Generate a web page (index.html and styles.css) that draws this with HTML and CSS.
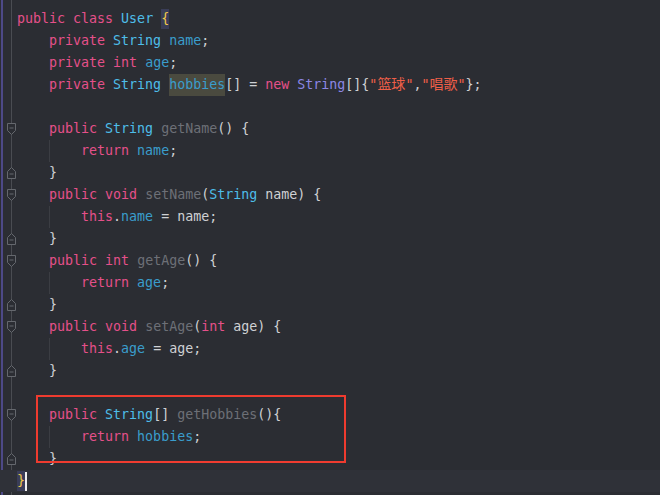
FILE: index.html
```html
<!DOCTYPE html>
<html>
<head>
<meta charset="utf-8">
<link rel="stylesheet" href="styles.css">
</head>
<body>
<div class="editor">
  <div class="gutter">
    <div class="g"></div>
    <div class="g"></div>
    <div class="g"></div>
    <div class="g"></div>
    <div class="g"></div>
    <div class="g"><svg class="fold" viewBox="0 0 9 12" width="9" height="12"><path d="M0.5 0.5H8.5V7.5L4.5 11.5L0.5 7.5Z"/><line x1="2.5" y1="5" x2="6.5" y2="5"/></svg></div>
    <div class="g"></div>
    <div class="g"><svg class="fold" viewBox="0 0 9 12" width="9" height="12"><path d="M0.5 11.5H8.5V4.5L4.5 0.5L0.5 4.5Z"/><line x1="2.5" y1="7" x2="6.5" y2="7"/></svg></div>
    <div class="g"><svg class="fold" viewBox="0 0 9 12" width="9" height="12"><path d="M0.5 0.5H8.5V7.5L4.5 11.5L0.5 7.5Z"/><line x1="2.5" y1="5" x2="6.5" y2="5"/></svg></div>
    <div class="g"></div>
    <div class="g"><svg class="fold" viewBox="0 0 9 12" width="9" height="12"><path d="M0.5 11.5H8.5V4.5L4.5 0.5L0.5 4.5Z"/><line x1="2.5" y1="7" x2="6.5" y2="7"/></svg></div>
    <div class="g"><svg class="fold" viewBox="0 0 9 12" width="9" height="12"><path d="M0.5 0.5H8.5V7.5L4.5 11.5L0.5 7.5Z"/><line x1="2.5" y1="5" x2="6.5" y2="5"/></svg></div>
    <div class="g"></div>
    <div class="g"><svg class="fold" viewBox="0 0 9 12" width="9" height="12"><path d="M0.5 11.5H8.5V4.5L4.5 0.5L0.5 4.5Z"/><line x1="2.5" y1="7" x2="6.5" y2="7"/></svg></div>
    <div class="g"><svg class="fold" viewBox="0 0 9 12" width="9" height="12"><path d="M0.5 0.5H8.5V7.5L4.5 11.5L0.5 7.5Z"/><line x1="2.5" y1="5" x2="6.5" y2="5"/></svg></div>
    <div class="g"></div>
    <div class="g"><svg class="fold" viewBox="0 0 9 12" width="9" height="12"><path d="M0.5 11.5H8.5V4.5L4.5 0.5L0.5 4.5Z"/><line x1="2.5" y1="7" x2="6.5" y2="7"/></svg></div>
    <div class="g"></div>
    <div class="g"><svg class="fold" viewBox="0 0 9 12" width="9" height="12"><path d="M0.5 0.5H8.5V7.5L4.5 11.5L0.5 7.5Z"/><line x1="2.5" y1="5" x2="6.5" y2="5"/></svg></div>
    <div class="g"></div>
    <div class="g"><svg class="fold" viewBox="0 0 9 12" width="9" height="12"><path d="M0.5 11.5H8.5V4.5L4.5 0.5L0.5 4.5Z"/><line x1="2.5" y1="7" x2="6.5" y2="7"/></svg></div>
    <div class="g current"></div>
  </div>
  <div class="code">
    <div class="ln"><span class="kw">public</span> <span class="kw">class</span> <span class="cls">User</span> <span class="brace">{</span></div>
    <div class="ln">    <span class="kw">private</span> <span class="ty">String</span> <span class="fd">name</span>;</div>
    <div class="ln">    <span class="kw">private</span> <span class="kw">int</span> <span class="fd">age</span>;</div>
    <div class="ln">    <span class="kw">private</span> <span class="ty">String</span> <span class="fd hl">hobbies</span>[] = <span class="kw">new</span> <span class="ty2">String</span>[]{<span class="str">"<span class="cjk">篮球</span>"</span>,<span class="str">"<span class="cjk">唱歌</span>"</span>};</div>
    <div class="ln"> </div>
    <div class="ln">    <span class="kw">public</span> <span class="ty">String</span> <span class="mt">getName</span>() {</div>
    <div class="ln body">        <span class="kw">return</span> <span class="fd">name</span>;</div>
    <div class="ln">    }</div>
    <div class="ln">    <span class="kw">public</span> <span class="kw">void</span> <span class="mt">setName</span>(<span class="ty">String</span> name) {</div>
    <div class="ln body">        <span class="kw">this</span>.<span class="fd">name</span> = name;</div>
    <div class="ln">    }</div>
    <div class="ln">    <span class="kw">public</span> <span class="kw">int</span> <span class="mt">getAge</span>() {</div>
    <div class="ln body">        <span class="kw">return</span> <span class="fd">age</span>;</div>
    <div class="ln">    }</div>
    <div class="ln">    <span class="kw">public</span> <span class="kw">void</span> <span class="mt">setAge</span>(<span class="kw">int</span> age) {</div>
    <div class="ln body">        <span class="kw">this</span>.<span class="fd">age</span> = age;</div>
    <div class="ln">    }</div>
    <div class="ln"> </div>
    <div class="ln">    <span class="kw">public</span> <span class="ty">String</span>[] <span class="mt">getHobbies</span>(){</div>
    <div class="ln body">        <span class="kw">return</span> <span class="fd">hobbies</span>;</div>
    <div class="ln">    }</div>
    <div class="ln current"><span class="brace">}</span><span class="caret"></span></div>
  </div>
  <div class="mark"></div>
</div>
</body>
</html>
```

FILE: styles.css
```css
html, body {
  margin: 0;
  padding: 0;
  background: #2b2d33;
}
body {
  width: 660px;
  height: 495px;
  overflow: hidden;
}
.editor {
  position: relative;
  display: flex;
  padding-top: 8px;
  height: 487px;
  background: linear-gradient(to right, transparent 1px, #4d4987 1px, #4d4987 3px, transparent 3px) no-repeat 0 0 / 17px 100%,
              linear-gradient(to right, transparent 11px, #4a4c52 11px, #4a4c52 12px, transparent 12px) no-repeat 0 0 / 17px 100%;
}
.gutter {
  width: 17px;
  flex: none;
  display: flex;
  flex-direction: column;
}
.g {
  height: 22px;
  display: flex;
  align-items: center;
  padding-left: 7px;
}
.fold {
  display: block;
}
.fold path {
  fill: #2b2d33;
  stroke: #65686e;
  stroke-width: 1;
}
.fold line {
  stroke: #65686e;
  stroke-width: 1;
}
.code {
  flex: 1;
  font-family: "DejaVu Sans Mono", "Liberation Mono", monospace;
  font-size: 13.3px;
  color: #cfd1d4;
}
.ln {
  height: 22px;
  line-height: 22px;
  white-space: pre;
}
.ln.body {
  background: linear-gradient(to right, transparent 32px, #3b3d43 32px, #3b3d43 33px, transparent 33px);
}
.ln.current {
  background: #2f3138;
  margin-left: -17px;
  padding-left: 17px;
}
.kw { color: #e5508a; }
.cls { color: #4ebde9; }
.ty { color: #4ebde9; }
.ty2 { color: #8c87e6; }
.fd { color: #3a9dcc; }
.mt { color: #6d7077; }
.str { color: #ef5f48; }
.cjk {
  font-family: "Noto Sans CJK SC", sans-serif;
  font-size: 14px;
  line-height: 18px;
}
.hl {
  background: #4a4a3f;
  padding: 3px 0 4px;
}
.brace {
  color: #f1c94a;
  background: #3a3d58;
  padding: 2px 0 3px;
}
.caret {
  display: inline-block;
  width: 2px;
  height: 19px;
  background: #f0f0f0;
  vertical-align: middle;
}
.mark {
  position: absolute;
  left: 36px;
  top: 395px;
  width: 306px;
  height: 64px;
  border: 2px solid #ef3b2f;
}
```
